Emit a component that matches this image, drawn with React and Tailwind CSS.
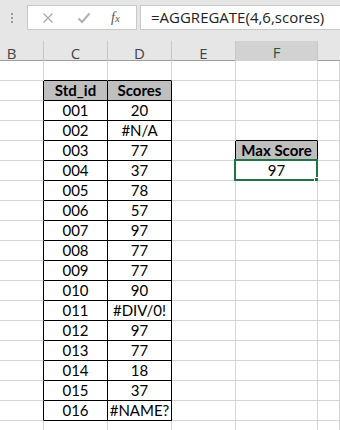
import React from "react";

const COLS = ["B", "C", "D", "E", "F", ""];

const DATA = [
  ["001", "20"],
  ["002", "#N/A"],
  ["003", "77"],
  ["004", "37"],
  ["005", "78"],
  ["006", "57"],
  ["007", "97"],
  ["008", "77"],
  ["009", "77"],
  ["010", "90"],
  ["011", "#DIV/0!"],
  ["012", "97"],
  ["013", "77"],
  ["014", "18"],
  ["015", "37"],
  ["016", "#NAME?"],
];

const ROW_COUNT = 19;
const TABLE_TOP = 1;
const TABLE_BOTTOM = TABLE_TOP + DATA.length;

// content of a cell by row / column index
const cellText = (r, c) => {
  if (r === TABLE_TOP && c === 1) return "Std_id";
  if (r === TABLE_TOP && c === 2) return "Scores";
  if (r > TABLE_TOP && r <= TABLE_BOTTOM && c === 1) return DATA[r - TABLE_TOP - 1][0];
  if (r > TABLE_TOP && r <= TABLE_BOTTOM && c === 2) return DATA[r - TABLE_TOP - 1][1];
  if (r === 4 && c === 4) return "Max Score";
  if (r === 5 && c === 4) return "97";
  return "";
};

const inTable = (r, c) => r >= TABLE_TOP && r <= TABLE_BOTTOM && (c === 1 || c === 2);

const cellClass = (r, c) => {
  const isHead = (r === TABLE_TOP && inTable(r, c)) || (r === 4 && c === 4);
  const blackRight = inTable(r, c) || inTable(r, c + 1) || (r === 4 && (c === 4 || c === 3));
  const blackBottom = inTable(r, c) || inTable(r + 1, c) || (r === 4 && c === 4) || (r === 3 && c === 4);
  return [
    "relative h-[20px] flex items-center justify-center border-r border-b text-[15px] text-black",
    blackRight ? "border-r-black" : "border-r-[#d4d4d4]",
    blackBottom ? "border-b-black" : "border-b-[#d4d4d4]",
    isHead ? "bg-[#bfbfbf] font-bold" : "bg-white",
  ].join(" ");
};

const Dots = () => (
  <div className="flex flex-col gap-[2px] ml-[11px]">
    <span className="w-[2px] h-[2px] bg-[#9a9a9a]" />
    <span className="w-[2px] h-[2px] bg-[#9a9a9a]" />
    <span className="w-[2px] h-[2px] bg-[#9a9a9a]" />
  </div>
);

export default function App() {
  return (
    <div className="w-[340px] h-[430px] overflow-hidden bg-white" style={{ fontFamily: "Lato, sans-serif" }}>
      {/* formula bar */}
      <div className="h-[41px] bg-[#e6e6e6] flex items-start pt-[5px]">
        <div className="h-[25px] flex items-center">
          <Dots />
        </div>
        <div className="ml-[14px] w-[110px] h-[25px] bg-white border border-[#c8c8c8] flex items-center">
          <svg width="12" height="12" viewBox="0 0 12 12" className="ml-[14px]">
            <path d="M1.5 1.5 L10.5 10.5 M10.5 1.5 L1.5 10.5" stroke="#a8a8a8" strokeWidth="1.3" fill="none" />
          </svg>
          <svg width="14" height="12" viewBox="0 0 14 12" className="ml-[23px]">
            <path d="M1.5 6.5 L5 10 L12.5 1.5" stroke="#b0b0b0" strokeWidth="2" fill="none" />
          </svg>
          <span
            className="ml-[20px] text-[14px] italic text-[#555] leading-none"
            style={{ fontFamily: '"Liberation Serif", serif' }}
          >
            f<span className="text-[11px]">x</span>
          </span>
        </div>
        <div className="ml-[3px] flex-1 h-[25px] bg-white border border-r-0 border-[#c8c8c8] flex items-center pl-[10px]">
          <span className="text-[15px] text-[#222]" style={{ fontFamily: '"Open Sans", sans-serif' }}>
            =AGGREGATE(4,6,scores)
          </span>
        </div>
      </div>

      {/* sheet, scrolled so column B is partly hidden */}
      <div className="-ml-[20px] w-[360px]">
        {/* column headers */}
        <div
          className="grid grid-cols-[64px_64px_64px_64px_82px_1fr] h-[20px] bg-[#e6e6e6] border-b border-[#9e9e9e]"
          style={{ fontFamily: '"Open Sans", sans-serif' }}
        >
          {COLS.map((col, i) => (
            <div
              key={i}
              className={
                "flex items-center justify-center text-[15px] " +
                (i < 5 ? "border-r border-[#c6c6c6] " : "") +
                (col === "F" ? "bg-[#d2d2d2] text-[#1f5a3a] border-b-2 border-b-[#217346]" : "text-[#444]")
              }
            >
              {col}
            </div>
          ))}
        </div>

        {/* cells */}
        <div className="grid grid-cols-[64px_64px_64px_64px_82px_1fr] auto-rows-[20px]">
          {Array.from({ length: ROW_COUNT }).map((_, r) =>
            COLS.map((_, c) => (
              <div key={r + "-" + c} className={cellClass(r, c)}>
                {cellText(r, c)}
                {r === 5 && c === 4 && (
                  <div className="absolute -left-[2px] -top-[2px] -right-[1px] -bottom-[1px] border-2 border-[#217346]">
                    <span className="absolute -right-[4px] -bottom-[4px] w-[6px] h-[6px] bg-[#217346] border border-white" />
                  </div>
                )}
              </div>
            ))
          )}
        </div>
      </div>
    </div>
  );
}
